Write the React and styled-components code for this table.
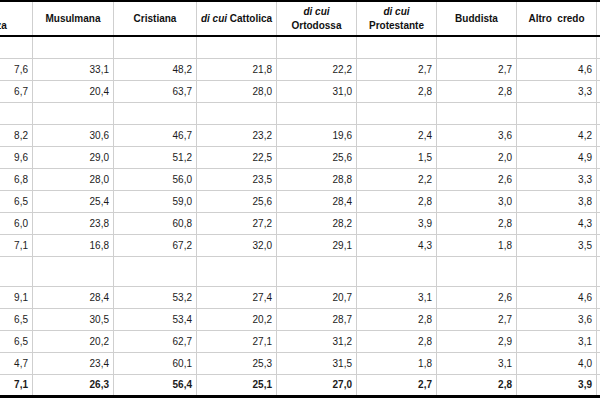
import React from "react";
import styled, { createGlobalStyle } from "styled-components";

const GlobalStyle = createGlobalStyle`
html, body {
    margin: 0;
    padding: 0;
    background: #fff;
}
`

const Viewport = styled.div`
width: 600px;
height: 400px;
overflow: hidden;
background: #fff;
`
const Table = styled.table`
border-collapse: collapse;
table-layout: fixed;
width: 760px;
margin-left: -84px;
font-family: "Liberation Sans", Arial, sans-serif;
color: #1b1b1b;
border-top: 2px solid #000;
border-bottom: 3px solid #000;
`
const Head = styled.th`
height: 33px;
padding: 0 3px;
border-left: 1px solid #cfcfcf;
border-right: 1px solid #cfcfcf;
border-bottom: 2px solid #000;
font-size: 10px;
font-weight: bold;
line-height: 14px;
text-align: center;
vertical-align: middle;
color: #111;
`
const Em = styled.i`
font-style: italic;
`
const Row = styled.tr`
height: ${props => props.$tall ? 30 : 22}px;
`
const Cell = styled.td`
padding: 0 4px 0 0;
border: 1px solid #cfcfcf;
font-size: 10px;
font-weight: ${props => props.$total ? "bold" : "normal"};
text-align: right;
vertical-align: middle;
white-space: nowrap;
`

const widths = [116, 81, 83, 80, 80, 80, 80, 80, 80];

const headers = [
    <>Nessuna<br />appartenenza</>,
    <>Musulmana</>,
    <>Cristiana</>,
    <><Em>di cui</Em> Cattolica</>,
    <><Em>di cui</Em><br />Ortodossa</>,
    <><Em>di cui</Em><br />Protestante</>,
    <>Buddista</>,
    <>Altro&nbsp; credo</>,
    <></>,
];

const rows = [
    { empty: true },
    { v: ["7,6", "33,1", "48,2", "21,8", "22,2", "2,7", "2,7", "4,6"] },
    { v: ["6,7", "20,4", "63,7", "28,0", "31,0", "2,8", "2,8", "3,3"] },
    { empty: true },
    { v: ["8,2", "30,6", "46,7", "23,2", "19,6", "2,4", "3,6", "4,2"] },
    { v: ["9,6", "29,0", "51,2", "22,5", "25,6", "1,5", "2,0", "4,9"] },
    { v: ["6,8", "28,0", "56,0", "23,5", "28,8", "2,2", "2,6", "3,3"] },
    { v: ["6,5", "25,4", "59,0", "25,6", "28,4", "2,8", "3,0", "3,8"] },
    { v: ["6,0", "23,8", "60,8", "27,2", "28,2", "3,9", "2,8", "4,3"] },
    { v: ["7,1", "16,8", "67,2", "32,0", "29,1", "4,3", "1,8", "3,5"] },
    { empty: true, tall: true },
    { v: ["9,1", "28,4", "53,2", "27,4", "20,7", "3,1", "2,6", "4,6"] },
    { v: ["6,5", "30,5", "53,4", "20,2", "28,7", "2,8", "2,7", "3,6"] },
    { v: ["6,5", "20,2", "62,7", "27,1", "31,2", "2,8", "2,9", "3,1"] },
    { v: ["4,7", "23,4", "60,1", "25,3", "31,5", "1,8", "3,1", "4,0"] },
    { v: ["7,1", "26,3", "56,4", "25,1", "27,0", "2,7", "2,8", "3,9"], total: true },
];

const App = () => {
    return (
        <>
            <GlobalStyle />
            <Viewport>
                <Table>
                    <colgroup>
                        {widths.map((w, i) => <col key={i} style={{ width: w }} />)}
                    </colgroup>
                    <thead>
                        <tr>
                            {headers.map((h, i) => <Head key={i}>{h}</Head>)}
                        </tr>
                    </thead>
                    <tbody>
                        {rows.map((r, idx) => (
                            <Row key={idx} $tall={r.tall}>
                                {widths.map((_, i) => (
                                    <Cell key={i} $total={r.total}>{r.empty ? "" : (r.v[i] ?? "")}</Cell>
                                ))}
                            </Row>
                        ))}
                    </tbody>
                </Table>
            </Viewport>
        </>
    )
}
export default App;
